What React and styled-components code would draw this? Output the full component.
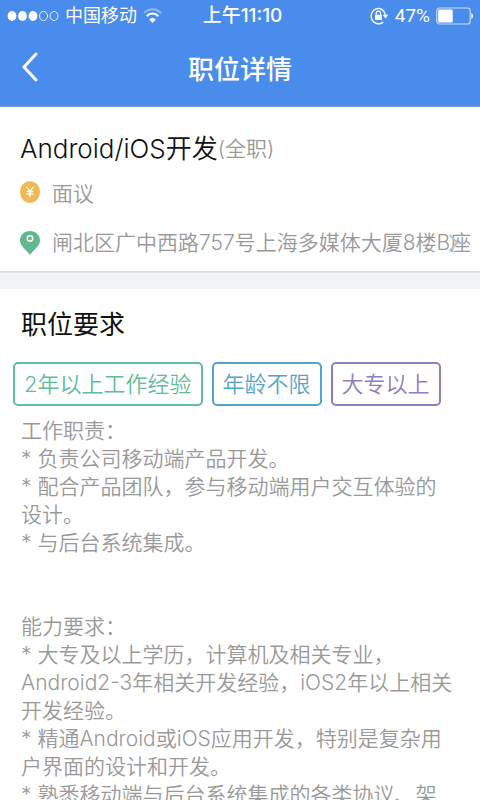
import React from "react";
import styled, { createGlobalStyle } from "styled-components";

const GlobalStyle = createGlobalStyle`
  *, *::before, *::after { box-sizing: border-box; }
  body {
    margin: 0;
    background: #fff;
    font-family: Inter, "Noto Sans CJK SC", sans-serif;
    font-weight: 350;
    color: #999;
  }
  h1, h2, p, ul { margin: 0; padding: 0; font-weight: inherit; }
`;

const Screen = styled.div`
  display: flex;
  flex-direction: column;
  height: 100vh;
  overflow: hidden;
`;

const Header = styled.header`
  flex: none;
  background: #4a8cec;
  color: #fff;
  border-bottom: 1px solid #7f9fd4;
`;

const StatusBar = styled.div`
  display: grid;
  grid-template-columns: 1fr auto 1fr;
  align-items: center;
  height: 32px;
  padding: 0 6px 0 7px;
  font-size: 18px;
  line-height: 32px;
  font-weight: 400;
`;

const StatusGroup = styled.div`
  display: flex;
  align-items: center;
  justify-content: ${(p) => (p.$end ? "flex-end" : "flex-start")};
  gap: 6px;
  white-space: nowrap;
`;

const Time = styled.time`
  padding-left: 4px;
  font-size: 19px;
  font-weight: 500;
`;

const Charge = styled.span`
  font-family: Roboto, sans-serif;
  font-size: 19px;
`;

const NavBar = styled.nav`
  display: grid;
  grid-template-columns: 60px 1fr 60px;
  align-items: center;
  height: 74px;
`;

const BackButton = styled.button`
  display: flex;
  align-items: center;
  height: 48px;
  padding: 0 0 4px 21px;
  border: 0;
  background: none;
  color: inherit;
  cursor: pointer;
`;

const NavTitle = styled.h1`
  padding-top: 2px;
  font-size: 26px;
  line-height: 36px;
  font-weight: 500;
  text-align: center;
`;

const Content = styled.main`
  flex: 1;
  min-height: 0;
  overflow-y: auto;
  scrollbar-width: none;
  background: #f2f3f5;
`;

const Summary = styled.section`
  padding: 24px 0 2px 20px;
  background: #fff;
  border-bottom: 2px solid #dedfe0;
  overflow: hidden;
`;

const JobTitle = styled.h2`
  display: flex;
  align-items: center;
  font-size: 26px;
  line-height: 36px;
  color: #111;
  white-space: nowrap;
`;

const JobType = styled.span`
  font-size: 21px;
  color: #999;
`;

const Salary = styled.p`
  display: flex;
  align-items: center;
  gap: 12px;
  height: 50px;
  font-size: 21px;
`;

const Address = styled.a`
  position: relative;
  display: flex;
  align-items: center;
  gap: 12px;
  height: 52px;
  font-size: 21px;
  line-height: 32px;
  color: inherit;
  text-decoration: none;
  white-space: nowrap;
`;

const Disclosure = styled.span`
  position: absolute;
  right: 21px;
  top: 0;
  bottom: 0;
  display: flex;
  align-items: center;
`;

const Details = styled.section`
  margin-top: 16px;
  padding: 18px 24px 20px 21px;
  background: #fff;
`;

const SectionTitle = styled.h2`
  font-size: 26px;
  line-height: 36px;
  font-weight: 400;
  color: #111;
`;

const Tags = styled.ul`
  display: flex;
  gap: 9px;
  margin: 19px 0 11px -8px;
  list-style: none;
`;

const Tag = styled.li`
  flex: none;
  height: 44px;
  padding: 0 9px;
  border: 2px solid ${(p) => p.$color};
  border-radius: 5px;
  color: ${(p) => p.$color};
  font-size: 22px;
  line-height: 40px;
`;

const Description = styled.p`
  font-size: 21px;
  line-height: 28px;
  white-space: pre-line;
`;

const tags = [
  { label: "2年以上工作经验", color: "#62bd98" },
  { label: "年龄不限", color: "#55a5cb" },
  { label: "大专以上", color: "#8f7dc0" },
];

const description = `工作职责：
* 负责公司移动端产品开发。
* 配合产品团队，参与移动端用户交互体验的设计。
* 与后台系统集成。


能力要求：
* 大专及以上学历，计算机及相关专业，Android2-3年相关开发经验，iOS2年以上相关开发经验。
* 精通Android或iOS应用开发，特别是复杂用户界面的设计和开发。
* 熟悉移动端与后台系统集成的各类协议、架`;

const SignalIcon = () => (
  <svg width="52" height="12" viewBox="0 0 52 12" aria-hidden="true">
    {[5, 15.5, 26, 36.5, 47].map((x, i) => (
      <ellipse key={x} cx={x} cy="6" rx={i < 3 ? 4.4 : 4} ry={i < 3 ? 5 : 4.6}
        fill={i < 3 ? "#fff" : "none"} stroke="#fff" strokeWidth={i < 3 ? 0 : 0.9} />
    ))}
  </svg>
);

const WifiIcon = () => (
  <svg width="19" height="16" viewBox="0 0 19 16" fill="none" aria-hidden="true">
    <path d="M1 5.2C5.8-.1 13.2-.1 18 5.2" stroke="#8fbaf5" strokeWidth="2" />
    <path d="M3.7 8.3c3.4-3.7 8.2-3.7 11.6 0" stroke="#fff" strokeWidth="2.1" />
    <path d="M9.5 15 6.2 11.4c1.9-2 4.7-2 6.6 0z" fill="#fff" />
  </svg>
);

const RotationLockIcon = () => (
  <svg width="19" height="18" viewBox="0 0 19 18" fill="none" stroke="#fff" aria-hidden="true">
    <path d="M13.2 14.9A7.2 7.7 0 1 1 15.5 8" strokeWidth="1.4" />
    <path d="M12.7 7.7h5.6l-2.8 3.7z" fill="#fff" stroke="none" />
    <path d="M6.2 8V6.5a2.2 2.4 0 0 1 4.4 0V8" strokeWidth="1.2" />
    <rect x="5" y="7.8" width="6.8" height="5.2" rx=".6" fill="#fff" stroke="none" />
  </svg>
);

const BatteryIcon = () => (
  <svg width="38" height="18" viewBox="0 0 38 18" fill="none" aria-hidden="true">
    <rect x=".8" y="1" width="33.4" height="16" rx="2.8" stroke="#c6dcfb" strokeWidth="1.2" />
    <rect x="2.2" y="2.6" width="14.5" height="12.8" rx="1.2" fill="#fff" />
    <path d="M35.3 6c2.4.8 2.4 5.2 0 6z" fill="#e5effd" />
  </svg>
);

const BackIcon = () => (
  <svg width="17" height="30" viewBox="0 0 17 30" fill="none" aria-hidden="true">
    <path d="M15 2 3 15l12 13" stroke="#fff" strokeWidth="3" strokeLinecap="round" strokeLinejoin="round" />
  </svg>
);

const YuanIcon = () => (
  <svg width="20" height="22" viewBox="0 0 20 22" fill="none" aria-hidden="true">
    <ellipse cx="10" cy="11" rx="10" ry="10.8" fill="#efb956" />
    <path d="m6.6 5.8 3.4 4.5 3.4-4.5M10 10.3v6M6.4 10.6h7.2M6.4 13.2h7.2" stroke="#fff" strokeWidth="1.3" />
  </svg>
);

const PinIcon = () => (
  <svg width="20" height="24" viewBox="0 0 20 24" fill="none" aria-hidden="true">
    <path d="M10 24C6.8 19.6 0 15 0 9.6 0 4 4.4 0 10 0s10 4 10 9.6C20 15 13.2 19.6 10 24z" fill="#62b78e" />
    <circle cx="10" cy="7.4" r="2.7" stroke="#fff" strokeWidth="1.5" />
  </svg>
);

const ChevronIcon = () => (
  <svg width="11" height="18" viewBox="0 0 11 18" fill="none" aria-hidden="true">
    <path d="m1.5 1 8 8-8 8" stroke="#c2c2c6" strokeWidth="2" />
  </svg>
);

export default function App() {
  return (
    <Screen>
      <GlobalStyle />
      <Header>
        <StatusBar>
          <StatusGroup>
            <SignalIcon />
            <span>中国移动</span>
            <WifiIcon />
          </StatusGroup>
          <Time>上午11:10</Time>
          <StatusGroup $end>
            <RotationLockIcon />
            <Charge>47%</Charge>
            <BatteryIcon />
          </StatusGroup>
        </StatusBar>
        <NavBar>
          <BackButton type="button" aria-label="返回">
            <BackIcon />
          </BackButton>
          <NavTitle>职位详情</NavTitle>
        </NavBar>
      </Header>
      <Content>
        <Summary>
          <JobTitle>
            Android/iOS开发<JobType>(全职)</JobType>
          </JobTitle>
          <Salary>
            <YuanIcon />
            面议
          </Salary>
          <Address href="#map">
            <PinIcon />
            <span>闸北区广中西路757号上海多媒体大厦8楼B座</span>
            <Disclosure>
              <ChevronIcon />
            </Disclosure>
          </Address>
        </Summary>
        <Details>
          <SectionTitle>职位要求</SectionTitle>
          <Tags>
            {tags.map((tag) => (
              <Tag key={tag.label} $color={tag.color}>{tag.label}</Tag>
            ))}
          </Tags>
          <Description>{description}</Description>
        </Details>
      </Content>
    </Screen>
  );
}
